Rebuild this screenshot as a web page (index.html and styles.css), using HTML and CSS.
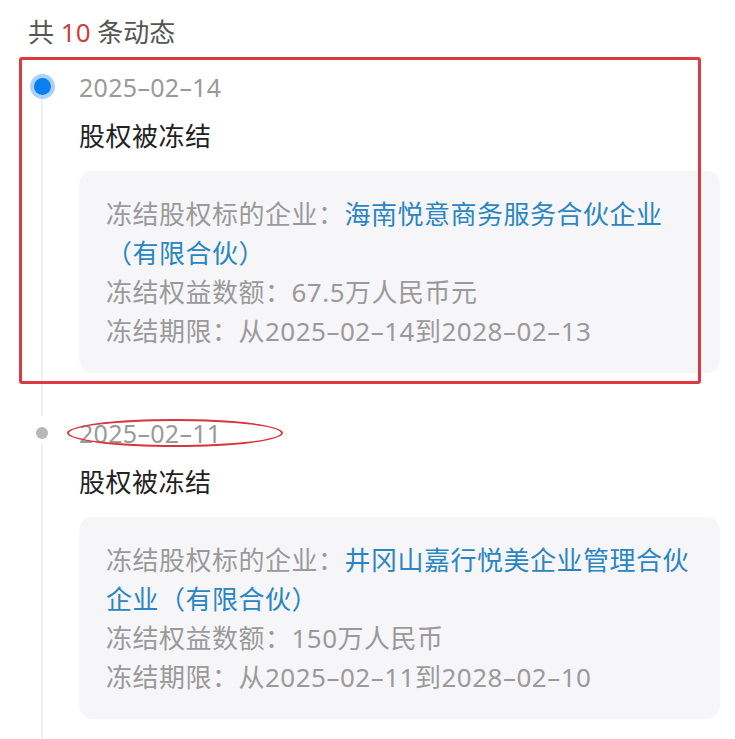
FILE: index.html
```html
<!DOCTYPE html>
<html lang="zh-CN">
<head>
<meta charset="utf-8">
<link rel="stylesheet" href="styles.css">
</head>
<body>
<div class="page">
  <div class="header">共 <span class="count">10</span> 条动态</div>
  <div class="timeline">
    <div class="item">
      <div class="rail"><span class="dot dot-active"></span><span class="line"></span></div>
      <div class="content">
        <div class="date">2025–02–14</div>
        <div class="title">股权被冻结</div>
        <div class="card">
          <p class="row">冻结股权标的企业：<span class="link">海南悦意商务服务合伙企业（有限合伙）</span></p>
          <p class="row">冻结权益数额：67.5万人民币元</p>
          <p class="row">冻结期限：从2025–02–14到2028–02–13</p>
        </div>
      </div>
      <div class="mark-box"></div>
    </div>
    <div class="item">
      <div class="rail"><span class="dot"></span><span class="line"></span></div>
      <div class="content">
        <div class="date"><span class="date-wrap">2025–02–11<span class="mark-ellipse"></span></span></div>
        <div class="title">股权被冻结</div>
        <div class="card">
          <p class="row">冻结股权标的企业：<span class="link">井冈山嘉行悦美企业管理合伙企业（有限合伙）</span></p>
          <p class="row">冻结权益数额：150万人民币</p>
          <p class="row">冻结期限：从2025–02–11到2028–02–10</p>
        </div>
      </div>
    </div>
  </div>
</div>
</body>
</html>
```

FILE: styles.css
```css
html, body {
  margin: 0;
  padding: 0;
  background: #ffffff;
}
body {
  font-family: "Noto Sans", "Noto Sans CJK SC", sans-serif;
  color: #222;
}
.page {
  width: 735px;
  height: 739px;
  overflow: hidden;
}
.header {
  padding: 15px 0 0 28px;
  font-size: 26px;
  line-height: 34px;
  color: #555;
}
.count {
  color: #c9423f;
}
.timeline {
  margin-top: 21px;
}
.item {
  position: relative;
  display: grid;
  grid-template-columns: 79px 1fr;
}
.rail {
  width: 24px;
  margin-left: 30px;
  display: flex;
  flex-direction: column;
  align-items: center;
}
.dot {
  flex: none;
  width: 12px;
  height: 12px;
  margin-top: 11px;
  border-radius: 50%;
  background: #b8b8b8;
}
.dot-active {
  width: 17px;
  height: 17px;
  margin-top: 8px;
  background: #0a7ff0;
  box-shadow: 0 0 0 4px #a9d2fa;
}
.line {
  flex: 1;
  width: 2px;
  margin-top: 4px;
  background: #f0f0f2;
}
.content {
  padding-right: 15px;
  padding-bottom: 43px;
}
.date {
  font-size: 25px;
  line-height: 34px;
  color: #9a9a9a;
  letter-spacing: 0.3px;
}
.title {
  margin-top: 15px;
  font-size: 26px;
  line-height: 34px;
  color: #222;
  letter-spacing: 0.5px;
}
.card {
  margin-top: 18px;
  padding: 24px 20px 22px 27px;
  background: #f6f6f8;
  border-radius: 14px;
}
.row {
  margin: 0;
  font-size: 26px;
  line-height: 39px;
  letter-spacing: 0.5px;
  color: #9a9a9a;
}
.link {
  color: #2a86c2;
}
.mark-box {
  position: absolute;
  left: 19px;
  top: -13px;
  width: 676px;
  height: 321px;
  border: 3px solid #dc3a40;
  border-radius: 3px;
  pointer-events: none;
}
.date-wrap {
  position: relative;
  display: inline-block;
}
.mark-ellipse {
  position: absolute;
  left: -12px;
  top: 3px;
  width: 212px;
  height: 24px;
  border: 2px solid #d8353c;
  border-radius: 50%;
}
```
